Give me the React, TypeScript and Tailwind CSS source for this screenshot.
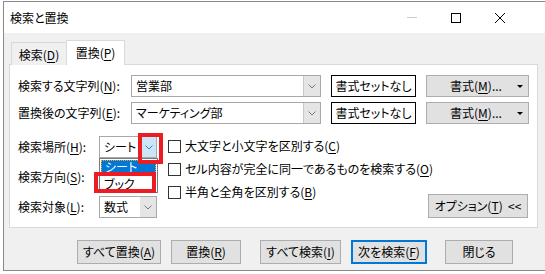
import React from "react";

const U = ({ children }: { children: React.ReactNode }) => (
  <span className="underline underline-offset-[2px] decoration-[1px]">{children}</span>
);

const Chevron = ({ color = "#7a7a7a" }: { color?: string }) => (
  <svg width="8" height="5" viewBox="0 0 8 5">
    <path d="M0.5 0.5 L4 4 L7.5 0.5" fill="none" stroke={color} strokeWidth="1" />
  </svg>
);

const Combo = ({ value }: { value: string }) => (
  <div className="w-[190px] h-[22px] border border-[#a8a8a8] bg-white flex">
    <div className="flex-1 flex items-center pl-[4px]">{value}</div>
    <div className="w-[17px] bg-[#e5e5e5] border-l border-[#c8c8c8] flex items-center justify-center">
      <Chevron />
    </div>
  </div>
);

const Select = ({ value, open }: { value: string; open?: boolean }) => (
  <div className="w-[58px] h-[22px] border border-[#a8a8a8] bg-white flex">
    <div className="flex-1 flex items-center pl-[4px]">{value}</div>
    <div
      className={
        open
          ? "w-[16px] bg-[#cce4f7] border-l border-[#569de5] flex items-center justify-center"
          : "w-[16px] bg-[#e5e5e5] flex items-center justify-center"
      }
    >
      <Chevron color={open ? "#3c7fb1" : "#7a7a7a"} />
    </div>
  </div>
);

const Check = ({ children }: { children: React.ReactNode }) => (
  <div className="h-[22px] flex items-center whitespace-nowrap">
    <div className="w-[13px] h-[13px] border border-[#333] bg-white" />
    <span className="ml-[4px]">{children}</span>
  </div>
);

const Btn = ({ w, children, focus }: { w: string; children: React.ReactNode; focus?: boolean }) => (
  <div
    className={
      "h-[24px] flex items-center justify-center bg-[#e1e1e1] whitespace-nowrap " +
      (focus ? "border-2 border-[#0078d7] " : "border border-[#adadad] ") +
      w
    }
  >
    {children}
  </div>
);

export default function App() {
  return (
    <div className="relative w-[545px] h-[274px] overflow-hidden bg-white text-[12px] leading-none text-black whitespace-nowrap [font-feature-settings:'palt'] font-['Noto_Sans_CJK_JP','Noto_Sans',sans-serif]">
      <div className="ml-[3px] mt-[1px] w-[580px] h-[270px] border border-[#8a8a8a] bg-[#f0f0f0] flex flex-col">
        {/* title bar */}
        <div className="h-[31px] bg-white flex items-center shrink-0">
          <span className="pl-[6px]">検索と置換</span>
          <div className="flex-1" />
          <div className="w-[44px] flex justify-center">
            <div className="w-[10px] h-px bg-[#cccccc]" />
          </div>
          <div className="w-[44px] flex justify-center">
            <div className="w-[10px] h-[10px] border border-black" />
          </div>
          <div className="w-[44px] flex justify-center">
            <svg width="10" height="10" viewBox="0 0 10 10">
              <path d="M0 0 L10 10 M10 0 L0 10" stroke="#000" strokeWidth="1" />
            </svg>
          </div>
          <div className="w-[60px]" />
        </div>

        <div className="px-[5px] flex flex-col">
          {/* tabs */}
          <div className="flex items-end pt-[7px] ml-[2px] relative z-10">
            <div className="w-[55px] h-[23px] border-l border-t border-[#d9d9d9] bg-[#f0f0f0] flex items-center justify-center pt-[2px] -mb-px">
              検索(<U>D</U>)
            </div>
            <div className="w-[59px] h-[25px] border-l border-t border-r border-[#d9d9d9] bg-white flex items-center justify-center -mb-px">
              置換(<U>P</U>)
            </div>
          </div>

          {/* panel */}
          <div className="w-[529px] h-[164px] border border-[#d9d9d9] bg-white pt-[10px] pl-[8px]">
            <div className="flex items-center">
              <div className="w-[113px]">
                検索する文字列(<U>N</U>):
              </div>
              <Combo value="営業部" />
              <div className="ml-[10px] w-[85px] h-[22px] border border-black flex items-center justify-center">
                書式セットなし
              </div>
              <div className="ml-[10px] w-[103px] h-[22px] border border-[#adadad] bg-[#e1e1e1] flex items-center">
                <span className="flex-1 text-center pl-[8px]">
                  書式(<U>M</U>)...
                </span>
                <svg width="6" height="3" viewBox="0 0 6 3" className="mr-[5px]">
                  <path d="M0 0 L6 0 L3 3 Z" fill="#000" />
                </svg>
              </div>
            </div>
            <div className="flex items-center mt-[5px]">
              <div className="w-[113px]">
                置換後の文字列(<U>E</U>):
              </div>
              <Combo value="マーケティング部" />
              <div className="ml-[10px] w-[85px] h-[22px] border border-black flex items-center justify-center">
                書式セットなし
              </div>
              <div className="ml-[10px] w-[103px] h-[22px] border border-[#adadad] bg-[#e1e1e1] flex items-center">
                <span className="flex-1 text-center pl-[8px]">
                  書式(<U>M</U>)...
                </span>
                <svg width="6" height="3" viewBox="0 0 6 3" className="mr-[5px]">
                  <path d="M0 0 L6 0 L3 3 Z" fill="#000" />
                </svg>
              </div>
            </div>

            <div className="flex mt-[12px]">
              <div className="flex flex-col gap-[8px]">
                <div className="flex items-center">
                  <div className="w-[81px]">
                    検索場所(<U>H</U>):
                  </div>
                  <Select value="シート" open />
                </div>
                <div className="flex items-center">
                  <div className="w-[81px]">
                    検索方向(<U>S</U>):
                  </div>
                  <Select value="" />
                </div>
                <div className="flex items-center">
                  <div className="w-[81px]">
                    検索対象(<U>L</U>):
                  </div>
                  <Select value="数式" />
                </div>
              </div>
              <div className="ml-[11px] w-[360px] flex flex-col gap-px -mt-px">
                <Check>
                  大文字と小文字を区別する(<U>C</U>)
                </Check>
                <Check>
                  セル内容が完全に同一であるものを検索する(<U>O</U>)
                </Check>
                <div className="flex justify-between items-start">
                  <Check>
                    半角と全角を区別する(<U>B</U>)
                  </Check>
                  <div className="mt-[13px]">
                    <Btn w="w-[100px]">
                      オプション(<U>T</U>)&nbsp;&nbsp;&lt;&lt;
                    </Btn>
                  </div>
                </div>
              </div>
            </div>
          </div>

          {/* bottom buttons */}
          <div className="flex mt-[12px] pl-[68px]">
            <Btn w="w-[84px]">
              すべて置換(<U>A</U>)
            </Btn>
            <div className="ml-[10px]">
              <Btn w="w-[70px]">
                置換(<U>R</U>)
              </Btn>
            </div>
            <div className="ml-[19px]">
              <Btn w="w-[81px]">
                すべて検索(<U>I</U>)
              </Btn>
            </div>
            <div className="ml-[10px]">
              <Btn w="w-[76px]" focus>
                次を検索(<U>F</U>)
              </Btn>
            </div>
            <div className="ml-[18px]">
              <Btn w="w-[68px]">閉じる</Btn>
            </div>
          </div>
        </div>
      </div>

      {/* open dropdown list */}
      <div className="absolute left-[99px] top-[158px] w-[59px] h-[35px] border border-[#7a7a7a] bg-white flex flex-col p-px">
        <div className="h-[14px] bg-[#0078d7] text-white flex items-center pl-[3px] border border-dotted border-[#f5a623]">
          シート
        </div>
        <div className="h-[16px] flex items-end pl-[3px]">ブック</div>
      </div>

      {/* red annotation boxes */}
      <div className="absolute left-[138px] top-[133px] w-[25px] h-[31px] border-[4px] border-[#ec1c24]" />
      <div className="absolute left-[94px] top-[172px] w-[62px] h-[21px] border-[4px] border-[#ec1c24]" />
    </div>
  );
}
